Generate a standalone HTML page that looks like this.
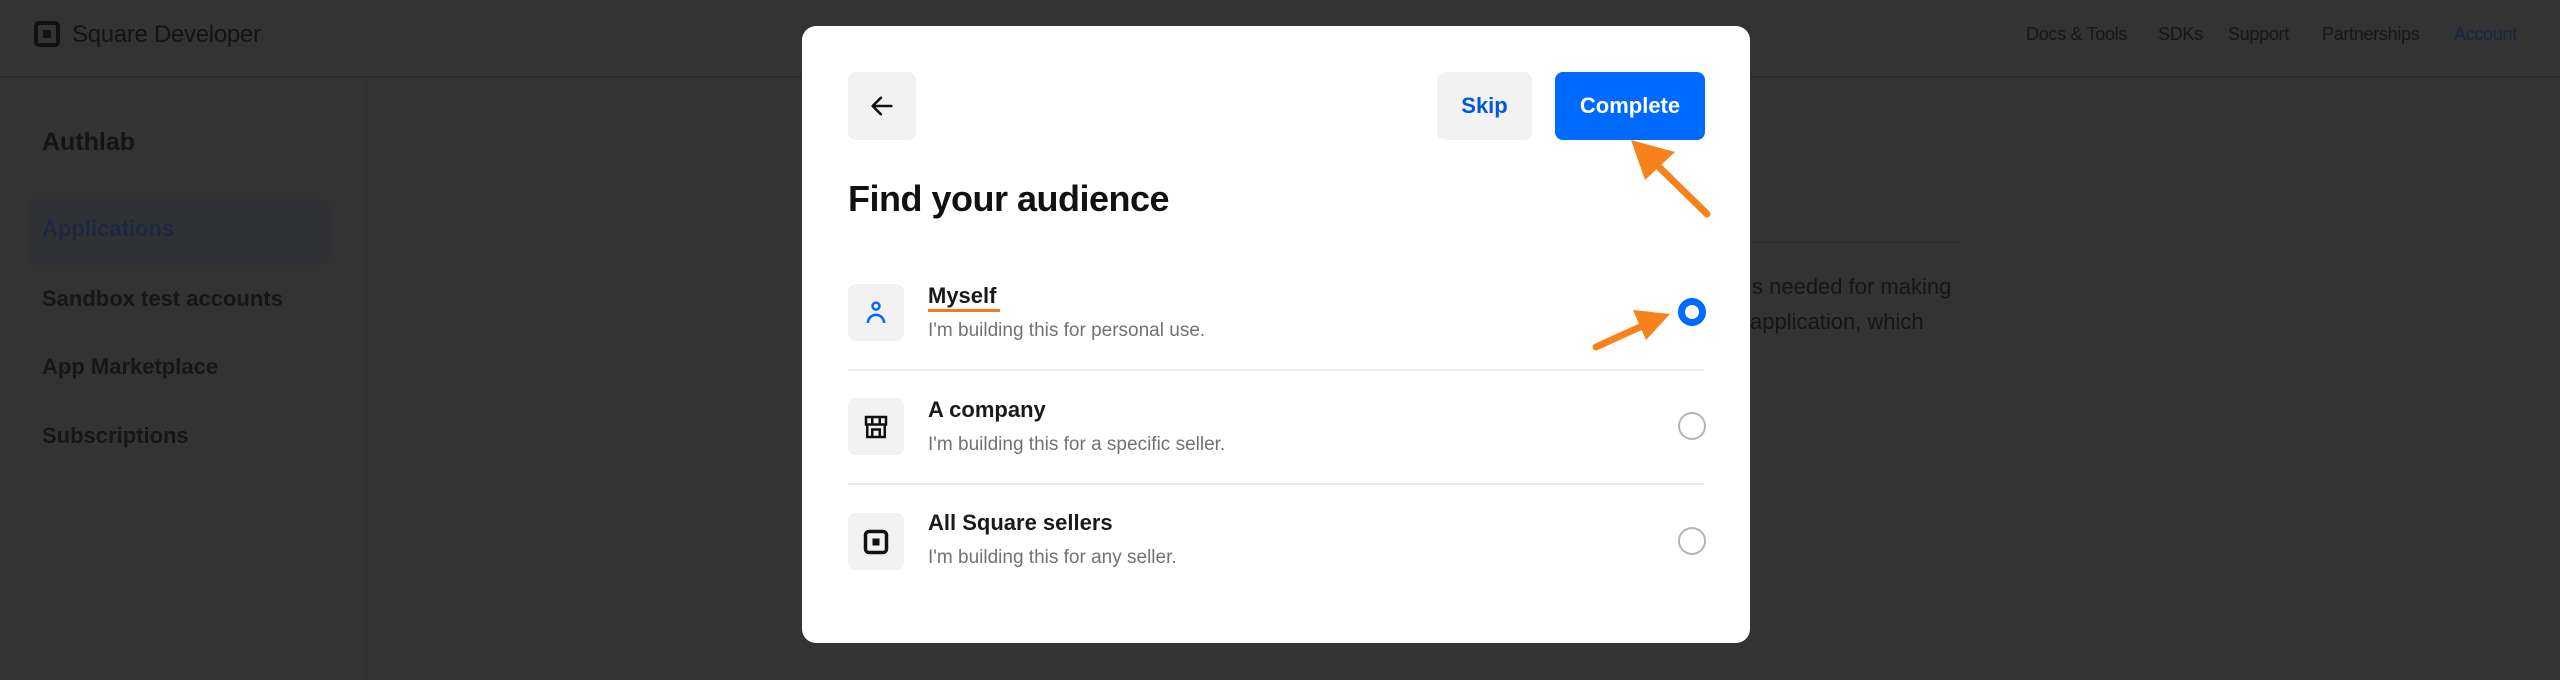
<!DOCTYPE html>
<html style="background:#333"><head><meta charset="utf-8"><style>
*{margin:0;padding:0;box-sizing:border-box}
html,body{background:#333}
body{width:2560px;height:680px;font-family:"Liberation Sans",sans-serif;position:relative;overflow:hidden;color:#151515}
.a{position:absolute}
.bg{left:0;top:0;width:2560px;height:680px;background:#333}
.hdr{left:0;top:0;width:2560px;height:78px;border-bottom:2px solid #2c2c2c}
.nav{top:24px;font-size:18px;color:#161616;letter-spacing:-0.3px}
.side{font-size:22px;font-weight:bold;color:#161616;left:42px}
.modal{left:802px;top:26px;width:948px;height:617px;background:#fff;border-radius:14px}
.btn{border-radius:8px;display:flex;align-items:center;justify-content:center;font-weight:bold;font-size:22px}
.ic{width:56px;height:57px;background:#f2f2f2;border-radius:8px;left:46px;display:flex;align-items:center;justify-content:center}
.t{left:126px;font-size:22px;font-weight:bold;color:#1a1a1a}
.s{left:126px;font-size:19px;color:#727272}
.div{left:46px;width:856px;height:2px;background:#ececec}
.r{left:876px;width:28px;height:28px;border-radius:50%;border:2px solid #b5b5b5}
</style></head><body>
<div class="a bg"></div>
<div class="a hdr"></div>
<div class="a" style="left:34px;top:21px;width:26px;height:26px;border:4px solid #111;border-radius:5px"><div style="position:absolute;left:5px;top:5px;width:8px;height:8px;background:#111"></div></div>
<div class="a" style="left:72px;top:21px;font-size:24px;color:#131313;letter-spacing:-0.3px">Square Developer</div>
<div class="a nav" style="left:2026px">Docs &amp; Tools</div>
<div class="a nav" style="left:2158px">SDKs</div>
<div class="a nav" style="left:2228px">Support</div>
<div class="a nav" style="left:2322px">Partnerships</div>
<div class="a nav" style="left:2454px;color:#1a2540">Account</div>
<div class="a" style="left:365px;top:80px;width:2px;height:600px;background:#303030"></div>
<div class="a" style="left:42px;top:128px;font-size:25px;font-weight:bold;color:#141414">Authlab</div>
<div class="a" style="left:26px;top:199px;width:304px;height:66px;background:#2f3135;border-radius:8px"></div>
<div class="a side" style="top:216px;color:#1c2742">Applications</div>
<div class="a side" style="top:286px">Sandbox test accounts</div>
<div class="a side" style="top:354px">App Marketplace</div>
<div class="a side" style="top:423px">Subscriptions</div>
<div class="a" style="left:1750px;top:241px;width:210px;height:2px;background:#2f2f2f"></div>
<div class="a" style="left:1752px;top:274px;font-size:22px;color:#151515">s needed for making</div>
<div class="a" style="left:1750px;top:309px;font-size:22px;color:#151515">application, which</div>

<div class="a modal">
 <div class="a btn" style="left:46px;top:46px;width:68px;height:68px;background:#f2f2f2">
  <svg width="28" height="28" viewBox="0 0 24 24"><path d="M20 12H5M11 5l-7 7 7 7" fill="none" stroke="#111" stroke-width="2.2" stroke-linecap="round" stroke-linejoin="round"/></svg></div>
 <div class="a btn" style="left:635px;top:46px;width:95px;height:68px;background:#f2f2f2;color:#0058d6">Skip</div>
 <div class="a btn" style="left:753px;top:46px;width:150px;height:68px;background:#006aff;color:#fff">Complete</div>
 <div class="a" style="left:46px;top:152px;font-size:36px;font-weight:bold;color:#111;letter-spacing:-0.5px">Find your audience</div>

 <div class="a ic" style="top:258px"><svg width="30" height="30" viewBox="0 0 24 24"><circle cx="12" cy="6.5" r="2.8" fill="none" stroke="#006aff" stroke-width="2"/><path d="M5.5 20a6.5 6.5 0 0 1 13 0" fill="none" stroke="#006aff" stroke-width="2"/></svg></div>
 <div class="a t" style="top:257px">Myself</div>
 <div class="a" style="left:126px;top:283px;width:72px;height:3px;background:#f47a15"></div>
 <div class="a s" style="top:294px">I'm building this for personal use.</div>
 <div class="a r" style="top:272px;border:7px solid #006aff;background:#fff"></div>
 <div class="a div" style="top:343px"></div>

 <div class="a ic" style="top:372px"><svg width="30" height="30" viewBox="0 0 24 24"><path d="M4 4h16v6H4zM5 10v10h14V10M9 20v-6h6v6M9 4v6M15 4v6" fill="none" stroke="#111" stroke-width="2"/></svg></div>
 <div class="a t" style="top:371px">A company</div>
 <div class="a s" style="top:408px">I'm building this for a specific seller.</div>
 <div class="a r" style="top:386px"></div>
 <div class="a div" style="top:457px"></div>

 <div class="a ic" style="top:487px"><svg width="28" height="28" viewBox="0 0 24 24"><rect x="3" y="3" width="18" height="18" rx="3" fill="none" stroke="#111" stroke-width="3"/><rect x="9" y="9" width="6" height="6" fill="#111"/></svg></div>
 <div class="a t" style="top:484px">All Square sellers</div>
 <div class="a s" style="top:521px">I'm building this for any seller.</div>
 <div class="a r" style="top:501px"></div>
</div>

<svg class="a" style="left:0;top:0" width="2560" height="680">
 <path d="M1707 214 L1660 168" stroke="#f7821b" stroke-width="7" stroke-linecap="round"/>
 <path d="M1631 140 L1675 152 L1645 180 Z" fill="#f7821b"/>
 <path d="M1596 347 L1640 327" stroke="#f7821b" stroke-width="7" stroke-linecap="round"/>
 <path d="M1670 314 L1633 310 L1646 340 Z" fill="#f7821b"/>
</svg>
</body></html>
